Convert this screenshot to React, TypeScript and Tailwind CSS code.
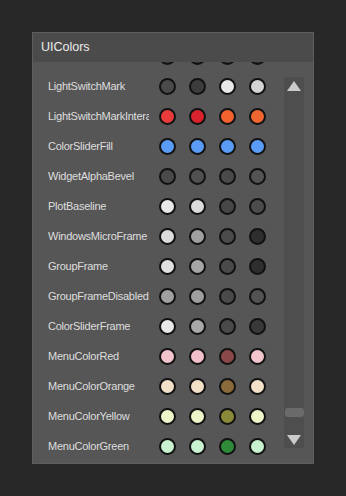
import React from "react";

type Row = { name: string; colors: string[] };

const rows: Row[] = [
  { name: "", colors: ["#3a3a3a", "#333333", "#3a3a3a", "#333333"] },
  { name: "LightSwitchMark", colors: ["#4a4a4a", "#3c3c3c", "#e8e8e8", "#d4d4d4"] },
  { name: "LightSwitchMarkInteract", colors: ["#ea3b3b", "#d8222e", "#f2622e", "#ee6630"] },
  { name: "ColorSliderFill", colors: ["#5a9bf6", "#5a9bf6", "#5a9bf6", "#5a9bf6"] },
  { name: "WidgetAlphaBevel", colors: ["#4a4a4a", "#505050", "#4a4a4a", "#535353"] },
  { name: "PlotBaseline", colors: ["#e8e8e8", "#dcdcdc", "#474747", "#4c4c4c"] },
  { name: "WindowsMicroFrame", colors: ["#dcdcdc", "#a0a0a0", "#4b4b4b", "#2e2e2e"] },
  { name: "GroupFrame", colors: ["#e0e0e0", "#a6a6a6", "#4a4a4a", "#2e2e2e"] },
  { name: "GroupFrameDisabled", colors: ["#a0a0a0", "#9e9e9e", "#4a4a4a", "#525252"] },
  { name: "ColorSliderFrame", colors: ["#e8e8e8", "#a8a8a8", "#4a4a4a", "#383838"] },
  { name: "MenuColorRed", colors: ["#f2c4cc", "#f2c0cb", "#8a4848", "#f2c4cc"] },
  { name: "MenuColorOrange", colors: ["#f2e0c8", "#f2e0c8", "#8a6a3a", "#f2e0c8"] },
  { name: "MenuColorYellow", colors: ["#eef5c8", "#eef5c8", "#8a8a38", "#eef5c8"] },
  { name: "MenuColorGreen", colors: ["#c8f2d0", "#c8f2d0", "#2f8a3a", "#c8f2d0"] },
];

export default function App() {
  return (
    <div
      className="w-[346px] h-[496px] bg-[#282828] pt-[32px] pl-[32px]"
      style={{ fontFamily: '"Liberation Sans", Arial, sans-serif' }}
    >
      <div className="w-[282px] h-[432px] bg-[#565656] border border-[#5e5e5e] flex flex-col">
        <div className="h-[29px] bg-[#4b4b4b] flex items-center pl-[8px] text-[12.5px] text-[#ececec] shrink-0">
          UIColors
        </div>
        <div className="flex-1 flex overflow-hidden">
          <div className="flex-1 overflow-hidden">
            <div className="-mt-[21px]">
              {rows.map((r, idx) => (
                <div key={idx} className="h-[30px] flex items-center">
                  <div className="w-[101px] ml-[15px] overflow-hidden whitespace-nowrap text-[11px] tracking-[-0.25px] text-[#dedede] leading-none">
                    {r.name}
                  </div>
                  <div className="flex gap-[13px] ml-[10px]">
                    {r.colors.map((c, i) => (
                      <div
                        key={i}
                        className="w-[17px] h-[17px] rounded-full border-2 border-[#111111]"
                        style={{ backgroundColor: c }}
                      />
                    ))}
                  </div>
                </div>
              ))}
            </div>
          </div>
          <div className="w-[20px] mr-[9px] mt-[15px] mb-[15px] bg-[#4e4e4e] flex flex-col items-center pt-[3px] pb-[2px]">
            <svg width="16" height="12" viewBox="0 0 16 12">
              <polygon points="8,1 15,11 1,11" fill="#cbcbcb" />
            </svg>
            <div className="flex-1" />
            <div className="h-[9px] w-[19px] rounded-[3px] bg-[#6a6a6a]" />
            <div className="h-[17px]" />
            <svg width="16" height="12" viewBox="0 0 16 12">
              <polygon points="1,1 15,1 8,11" fill="#cbcbcb" />
            </svg>
          </div>
        </div>
      </div>
    </div>
  );
}
